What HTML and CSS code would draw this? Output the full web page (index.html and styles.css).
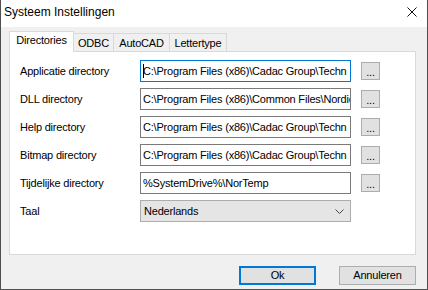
FILE: index.html
```html
<!DOCTYPE html>
<html lang="nl">
<head>
  <meta charset="UTF-8" />
  <title>Systeem Instellingen</title>
  <link rel="stylesheet" href="styles.css">
</head>
<body>
  <div class="window">
    <div class="titlebar">
      <span class="title">Systeem Instellingen</span>
      <svg class="close" width="10" height="10" viewBox="0 0 10 10">
        <path d="M0.5 0.5 L9.5 9.5 M9.5 0.5 L0.5 9.5" stroke="#111" stroke-width="1" fill="none"/>
      </svg>
    </div>
    <div class="content">
      <div class="tabs">
        <div class="tab active">Directories</div>
        <div class="tab odbc">ODBC</div>
        <div class="tab autocad">AutoCAD</div>
        <div class="tab letter">Lettertype</div>
      </div>
      <div class="panel">
        <div class="row">
          <label>Applicatie directory</label>
          <div class="field focus"><span class="caret"></span>C:\Program Files (x86)\Cadac Group\Techn</div>
          <div class="browse">...</div>
        </div>
        <div class="row">
          <label>DLL directory</label>
          <div class="field">C:\Program Files (x86)\Common Files\Nordic</div>
          <div class="browse">...</div>
        </div>
        <div class="row">
          <label>Help directory</label>
          <div class="field">C:\Program Files (x86)\Cadac Group\Techn</div>
          <div class="browse">...</div>
        </div>
        <div class="row">
          <label>Bitmap directory</label>
          <div class="field">C:\Program Files (x86)\Cadac Group\Techn</div>
          <div class="browse">...</div>
        </div>
        <div class="row">
          <label>Tijdelijke directory</label>
          <div class="field">%SystemDrive%\NorTemp</div>
          <div class="browse">...</div>
        </div>
        <div class="row">
          <label>Taal</label>
          <div class="select">
            <span>Nederlands</span>
            <svg width="9" height="5" viewBox="0 0 9 5">
              <path d="M0.5 0.5 L4.5 4.5 L8.5 0.5" stroke="#444" stroke-width="1" fill="none"/>
            </svg>
          </div>
        </div>
      </div>
      <div class="actions">
        <div class="btn default">Ok</div>
        <div class="btn">Annuleren</div>
      </div>
    </div>
  </div>
</body>
</html>
```

FILE: styles.css
```css
body {
  margin: 0;
  font-family: "Liberation Sans", Arial, sans-serif;
  font-size: 11px;
  letter-spacing: -0.2px;
  color: #000;
}
.window {
  width: 428px;
  height: 290px;
  box-sizing: border-box;
  border: 1px solid #4f4f4f;
  border-top: none;
  display: flex;
  flex-direction: column;
  background: #f0f0f0;
}
.titlebar {
  height: 27px;
  background: #fff;
  display: flex;
  align-items: center;
  justify-content: space-between;
  padding: 0 10px 0 3px;
}
.title {
  font-size: 12px;
  letter-spacing: 0;
  margin-top: -4px;
}
.close {
  margin-top: -3px;
}
.content {
  flex: 1;
  padding: 4px 11px 0 8px;
}
.tabs {
  display: flex;
  align-items: flex-end;
  height: 20px;
  position: relative;
  z-index: 1;
}
.tab {
  height: 18px;
  box-sizing: border-box;
  border: 1px solid #d9d9d9;
  border-bottom: none;
  border-left: none;
  padding-top: 3px;
  text-align: center;
  background: #f0f0f0;
}
.tab.active {
  width: 65px;
  height: 21px;
  margin-bottom: -1px;
  border-left: 1px solid #d9d9d9;
  background: #fff;
  padding-top: 2px;
}
.tab.odbc {
  width: 40px;
}
.tab.autocad {
  width: 56px;
}
.tab.letter {
  width: 57px;
}
.panel {
  height: 204px;
  box-sizing: border-box;
  border: 1px solid #d9d9d9;
  background: #fff;
  padding: 8px 10px;
  display: flex;
  flex-direction: column;
  gap: 6px;
}
.row {
  display: flex;
  align-items: center;
  height: 22px;
}
.row label {
  width: 120px;
  flex: none;
}
.field {
  width: 211px;
  height: 22px;
  box-sizing: border-box;
  border: 1px solid #7a7a7a;
  padding: 0 2px;
  line-height: 20px;
  white-space: nowrap;
  overflow: hidden;
  position: relative;
}
.field.focus {
  border-color: #0078d7;
}
.caret {
  position: absolute;
  left: 2px;
  top: 3px;
  width: 1px;
  height: 14px;
  background: #000;
}
.browse {
  margin-left: 10px;
  width: 19px;
  height: 18px;
  box-sizing: border-box;
  border: 1px solid #adadad;
  background: #e1e1e1;
  text-align: center;
  line-height: 18px;
}
.select {
  width: 211px;
  height: 22px;
  box-sizing: border-box;
  border: 1px solid #adadad;
  background: #e5e5e5;
  display: flex;
  align-items: center;
  justify-content: space-between;
  padding: 0 6px 0 3px;
}
.actions {
  display: flex;
  justify-content: flex-end;
  gap: 23px;
  padding-top: 11px;
}
.btn {
  width: 77px;
  height: 19px;
  box-sizing: border-box;
  border: 1px solid #adadad;
  background: #e1e1e1;
  text-align: center;
  line-height: 17px;
}
.btn.default {
  border: 2px solid #0078d7;
  line-height: 15px;
}
```
